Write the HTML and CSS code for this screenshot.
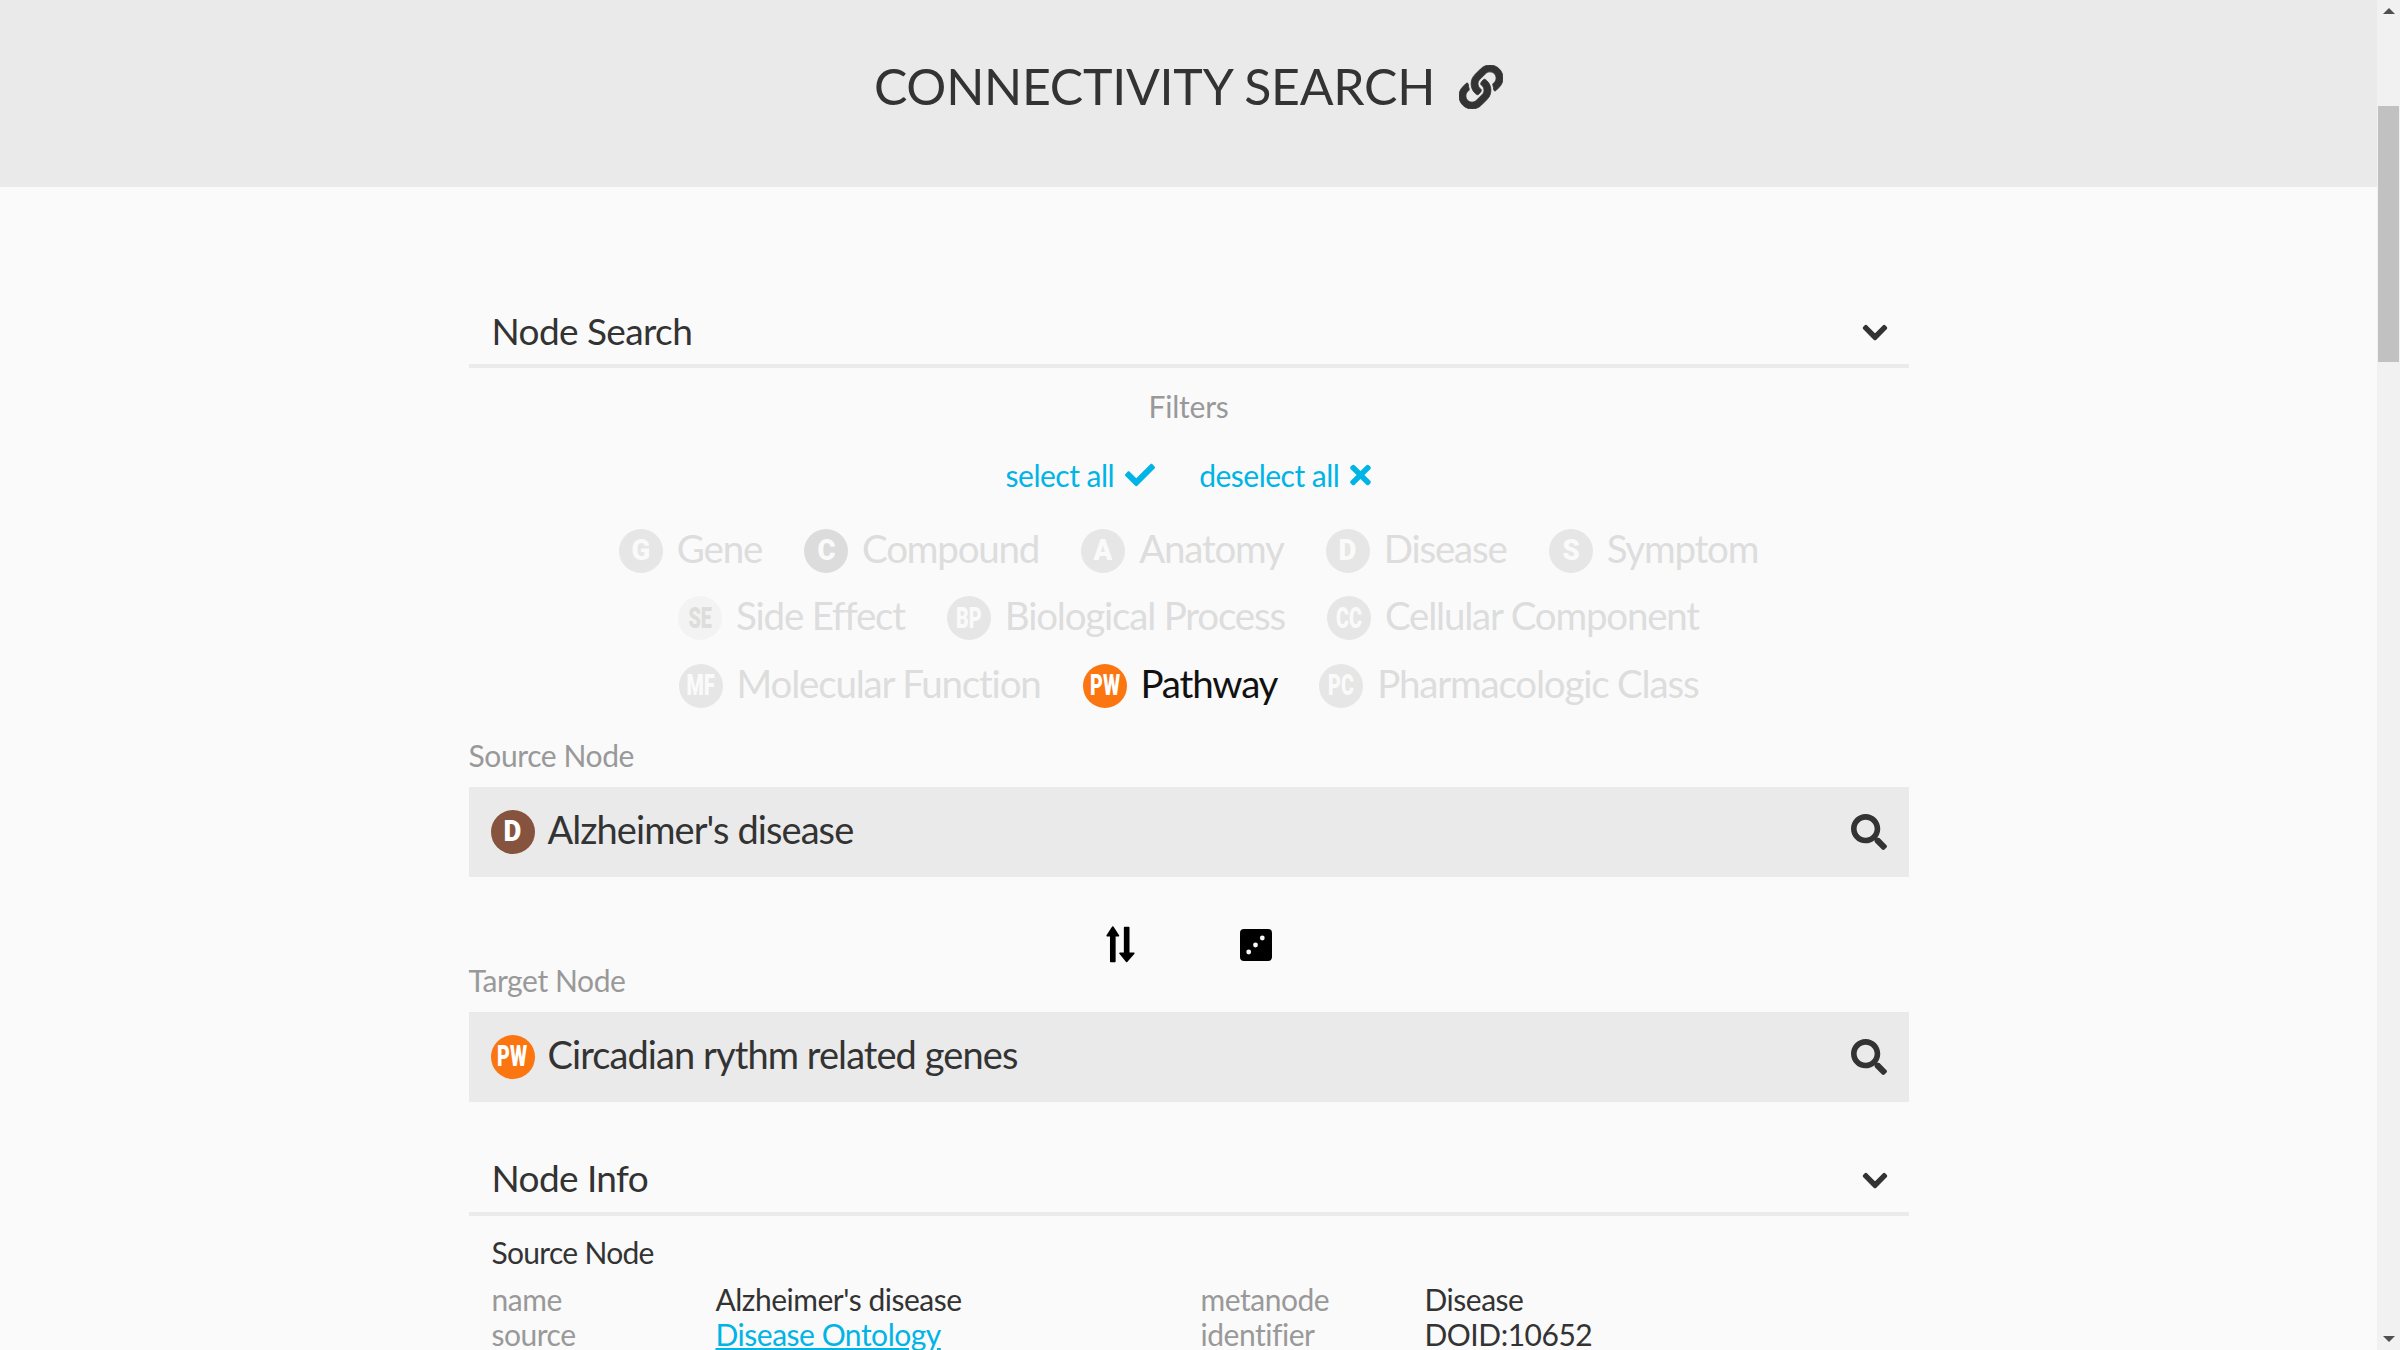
FILE: index.html
```html
<!DOCTYPE html>
<html lang="en">
<head>
<meta charset="utf-8">
<title>Connectivity Search</title>
<link rel="stylesheet" href="styles.css">
</head>
<body>
<div class="page">
  <header class="top">
    <h1 class="title">CONNECTIVITY SEARCH</h1>
    <svg class="link-icon" viewBox="0 0 512 512"><path d="M326.612 185.391c59.747 59.809 58.927 155.698.36 214.59-.11.12-.24.25-.36.37l-67.2 67.2c-59.27 59.27-155.699 59.262-214.96 0-59.27-59.26-59.27-155.7 0-214.96l37.106-37.106c9.84-9.84 26.786-3.3 27.294 10.606.648 17.722 3.826 35.527 9.69 52.721 1.986 5.822.567 12.262-3.783 16.612l-13.087 13.087c-28.026 28.026-28.905 73.66-1.155 101.96 28.024 28.579 74.086 28.749 102.325.51l67.2-67.19c28.191-28.191 28.073-73.757 0-101.83-3.701-3.694-7.429-6.564-10.341-8.569a16.037 16.037 0 0 1-6.947-12.606c-.396-10.567 3.348-21.456 11.698-29.806l21.054-21.055c5.521-5.521 14.182-6.199 20.584-1.731a152.482 152.482 0 0 1 20.522 17.197zM467.547 44.449c-59.261-59.262-155.69-59.27-214.96 0l-67.2 67.2c-.12.12-.25.25-.36.37-58.566 58.892-59.387 154.781.36 214.59a152.454 152.454 0 0 0 20.521 17.196c6.402 4.468 15.064 3.789 20.584-1.731l21.054-21.055c8.35-8.35 12.094-19.239 11.698-29.806a16.037 16.037 0 0 0-6.947-12.606c-2.912-2.005-6.64-4.875-10.341-8.569-28.073-28.073-28.191-73.639 0-101.83l67.2-67.19c28.239-28.239 74.3-28.069 102.325.51 27.75 28.3 26.872 73.934-1.155 101.96l-13.087 13.087c-4.35 4.35-5.769 10.79-3.783 16.612 5.864 17.194 9.042 34.999 9.69 52.721.509 13.906 17.454 20.446 27.294 10.606l37.106-37.106c59.271-59.259 59.271-155.699.001-214.959z"/></svg>
  </header>
  <main class="content">
    <section class="heading heading-first">
      <h2 class="heading-text">Node Search</h2>
      <svg class="chevron" viewBox="-20 100 488 310"><path d="M207.029 381.476L12.686 187.132c-9.373-9.373-9.373-24.569 0-33.941l22.667-22.667c9.357-9.357 24.522-9.375 33.901-.04L224 284.505l154.745-154.021c9.379-9.335 24.544-9.317 33.901.04l22.667 22.667c9.373 9.373 9.373 24.569 0 33.941L240.971 381.476c-9.373 9.372-24.569 9.372-33.942 0z"/></svg>
    </section>
    <div class="filters-label">Filters</div>
    <div class="select-row">
      <a class="select-link">select all <svg class="sel-icon" viewBox="0 0 512 512"><path d="M173.898 439.404l-166.4-166.4c-9.997-9.997-9.997-26.206 0-36.204l36.203-36.204c9.997-9.998 26.207-9.998 36.204 0L192 312.69 432.095 72.596c9.997-9.997 26.207-9.997 36.204 0l36.203 36.204c9.997 9.997 9.997 26.206 0 36.204l-294.4 294.401c-9.998 9.997-26.207 9.997-36.204-.001z"/></svg></a>
      <a class="select-link">deselect all <svg class="sel-icon x-icon" viewBox="0 0 352 512"><path d="M242.72 256l100.07-100.07c12.28-12.28 12.28-32.19 0-44.48l-22.24-22.24c-12.28-12.28-32.19-12.28-44.48 0L176 189.28 75.93 89.21c-12.28-12.28-32.19-12.28-44.48 0L9.21 111.45c-12.28 12.28-12.28 32.19 0 44.48L109.28 256 9.21 356.07c-12.28 12.28-12.28 32.19 0 44.48l22.24 22.24c12.28 12.28 32.2 12.28 44.48 0L176 322.72l100.07 100.07c12.28 12.28 32.2 12.28 44.48 0l22.24-22.24c12.28-12.28 12.28-32.19 0-44.48L242.72 256z"/></svg></a>
    </div>
    <div class="chips">
      <div class="chip-row">
        <span class="chip"><span class="badge"><span class="b-one">G</span></span>Gene</span>
        <span class="chip"><span class="badge badge-dark"><span class="b-one">C</span></span>Compound</span>
        <span class="chip"><span class="badge"><span class="b-one">A</span></span>Anatomy</span>
        <span class="chip"><span class="badge"><span class="b-one">D</span></span>Disease</span>
        <span class="chip"><span class="badge"><span class="b-one">S</span></span>Symptom</span>
      </div>
      <div class="chip-row">
        <span class="chip"><span class="badge badge-light"><span class="b-two">SE</span></span>Side Effect</span>
        <span class="chip"><span class="badge"><span class="b-two">BP</span></span>Biological Process</span>
        <span class="chip"><span class="badge"><span class="b-two">CC</span></span>Cellular Component</span>
      </div>
      <div class="chip-row">
        <span class="chip"><span class="badge"><span class="b-two">MF</span></span>Molecular Function</span>
        <span class="chip chip-on"><span class="badge badge-pw"><span class="b-two">PW</span></span>Pathway</span>
        <span class="chip"><span class="badge"><span class="b-two">PC</span></span>Pharmacologic Class</span>
      </div>
    </div>
    <label class="field-label">Source Node</label>
    <div class="input">
      <span class="badge badge-d"><span class="b-one">D</span></span><span class="input-text">Alzheimer's disease</span>
      <svg class="search" viewBox="0 0 512 512"><path d="M505 442.7L405.3 343c-4.5-4.5-10.6-7-17-7H372c27.6-35.3 44-79.7 44-128C416 93.1 322.9 0 208 0S0 93.1 0 208s93.1 208 208 208c48.3 0 92.7-16.4 128-44v16.3c0 6.4 2.5 12.5 7 17l99.7 99.7c9.4 9.4 24.6 9.4 33.9 0l28.3-28.3c9.4-9.4 9.4-24.6.1-34zM208 336c-70.7 0-128-57.2-128-128 0-70.7 57.2-128 128-128 70.7 0 128 57.2 128 128 0 70.7-57.2 128-128 128z"/></svg>
    </div>
    <div class="swap-row">
      <svg class="swap" viewBox="0 0 29 36"><path d="M7.5 1 13 9.5H9.5V34.5H5.5V9.5H2zM19 1.500H23V26.500H28L21 34.500 14.500 26.500H19z"/></svg>
      <svg class="dice" viewBox="0 0 32 32"><rect width="32" height="32" rx="4"/><circle class="pip" cx="8.700" cy="23" r="2.400"/><circle class="pip" cx="15.500" cy="16" r="2.400"/><circle class="pip" cx="22.300" cy="9" r="2.400"/></svg>
    </div>
    <label class="field-label field-label-target">Target Node</label>
    <div class="input">
      <span class="badge badge-pw"><span class="b-two">PW</span></span><span class="input-text">Circadian rythm related genes</span>
      <svg class="search" viewBox="0 0 512 512"><path d="M505 442.7L405.3 343c-4.5-4.5-10.6-7-17-7H372c27.6-35.3 44-79.7 44-128C416 93.1 322.9 0 208 0S0 93.1 0 208s93.1 208 208 208c48.3 0 92.7-16.4 128-44v16.3c0 6.4 2.5 12.5 7 17l99.7 99.7c9.4 9.4 24.6 9.4 33.9 0l28.3-28.3c9.4-9.4 9.4-24.6.1-34zM208 336c-70.7 0-128-57.2-128-128 0-70.7 57.2-128 128-128 70.7 0 128 57.2 128 128 0 70.7-57.2 128-128 128z"/></svg>
    </div>
    <section class="heading heading-info">
      <h2 class="heading-text">Node Info</h2>
      <svg class="chevron" viewBox="-20 100 488 310"><path d="M207.029 381.476L12.686 187.132c-9.373-9.373-9.373-24.569 0-33.941l22.667-22.667c9.357-9.357 24.522-9.375 33.901-.04L224 284.505l154.745-154.021c9.379-9.335 24.544-9.317 33.901.04l22.667 22.667c9.373 9.373 9.373 24.569 0 33.941L240.971 381.476c-9.373 9.372-24.569 9.372-33.942 0z"/></svg>
    </section>
    <div class="info">
      <div class="info-title">Source Node</div>
      <div class="info-grid">
        <span class="key">name</span><span class="val">Alzheimer's disease</span>
        <span class="key">metanode</span><span class="val">Disease</span>
        <span class="key">source</span><a class="val val-link">Disease Ontology</a>
        <span class="key">identifier</span><span class="val">DOID:10652</span>
      </div>
    </div>
  </main>
</div>
<aside class="scrollbar">
  <span class="arrow-up"></span>
  <span class="track"><span class="thumb"></span></span>
  <span class="arrow-down"></span>
</aside>
</body>
</html>
```
FILE: styles.css
```css
html, body { margin: 0; padding: 0; height: 100%; overflow: hidden; }
body { display: flex; background: #fafafa; color: #333; font-family: Lato, "Open Sans", sans-serif; }
.page { flex: 1; min-width: 0; height: 1350px; overflow: hidden; }
.top { height: 187px; background: #eaeaea; display: flex; align-items: center; justify-content: center; gap: 24px; padding-bottom: 14px; box-sizing: border-box; }
.title { margin: 0 0 2px; font-size: 50px; font-weight: 400; line-height: 1; color: #333; letter-spacing: -0.25px; }
.link-icon { width: 44px; height: 44px; fill: #333; stroke: #333; stroke-width: 10; }
.content { width: 1440px; margin: 0 auto; }
.heading { height: 52px; padding: 0 21px 8px 23px; border-bottom: 4px solid #ebebeb; display: flex; align-items: center; justify-content: space-between; }
.heading-first { margin-top: 117px; }
.heading-info { margin-top: 50px; }
.heading-text { margin: 0; font-size: 37px; font-weight: 400; color: #333; letter-spacing: -0.6px; }
.chevron { width: 26px; height: 17px; margin-top: 5px; fill: #333; stroke: #333; stroke-width: 22; }
.filters-label { text-align: center; font-size: 30px; line-height: 40px; color: #999; margin-top: 18px; letter-spacing: -0.2px; }
.select-row { display: flex; justify-content: center; gap: 44px; margin-top: 29px; height: 40px; align-items: center; }
.select-link { font-size: 30px; color: #00b4e6; display: flex; align-items: center; gap: 11px; letter-spacing: -0.5px; }
.sel-icon { width: 30px; height: 30px; fill: #00b4e6; }
.x-icon { width: 21px; }
.chips { margin-top: 19px; }
.chip-row { display: flex; justify-content: center; gap: 42px; height: 67.5px; align-items: center; }
.chip { display: flex; align-items: center; gap: 14px; font-size: 38.5px; letter-spacing: -1.2px; color: #ddd; line-height: 1; }
.chip .badge { margin-top: 6px; }
.chip-on { color: #111; }
.badge { width: 44px; height: 44px; border-radius: 50%; background: #e6e6e6; color: #fafafa; font-family: Roboto, Lato, sans-serif; font-size: 29px; font-weight: 900; display: flex; align-items: center; justify-content: center; flex: none; line-height: 1; letter-spacing: 0; }
.b-one { display: inline-block; transform: scaleX(0.95); }
.b-two { display: inline-block; transform: scaleX(0.68); }
.badge-dark { background: #dcdcdc; }
.badge-light { background: #f3f3f3; color: #ddd; }
.badge-pw { background: #fb7510; color: #fff; }
.badge-d { background: #86533f; color: #fff; }
.field-label { display: block; font-size: 30px; line-height: 40px; color: #999; margin-bottom: 12px; letter-spacing: -0.4px; }
.chips + .field-label { margin-top: 18px; }
.input { height: 90px; background: #eaeaea; display: flex; align-items: center; padding: 0 22px; }
.input-text { font-size: 38px; letter-spacing: -0.92px; color: #333; margin-left: 13px; padding-bottom: 5px; flex: 1; }
.search { width: 36px; height: 36px; fill: #333; }
.swap-row { height: 68px; display: flex; justify-content: center; align-items: center; gap: 105px; margin-top: 34px; }
.swap { width: 30px; height: 37px; fill: #000; stroke: #000; stroke-width: 1.5; stroke-linejoin: round; }
.dice { width: 32px; height: 32px; fill: #000; }
.pip { fill: #fafafa; }
.field-label-target { margin-top: -19px; }
.info { padding: 0 22px; }
.info-title { font-size: 30px; line-height: 40px; color: #333; margin-top: 16px; padding-left: 1px; letter-spacing: -0.7px; }
.info-grid { display: grid; grid-template-columns: 224px 485px 224px 1fr; grid-auto-rows: 35px; margin-top: 10px; font-size: 30px; line-height: 35px; letter-spacing: -0.48px; padding-left: 1px; }
.key { color: #999; }
.val { color: #333; }
.val-link { color: #00b4e6; text-decoration: underline; }
.scrollbar { width: 23px; height: 1350px; background: #f1f1f1; flex: none; display: flex; flex-direction: column; align-items: center; }
.arrow-up, .arrow-down { flex: none; width: 0; height: 0; border-left: 6px solid transparent; border-right: 6px solid transparent; }
.arrow-up { border-bottom: 6px solid #505050; margin: 8px 0; }
.arrow-down { border-top: 6px solid #505050; margin: 8px 0; }
.track { flex: 1; width: 100%; }
.thumb { display: block; margin: 84px 1px 0; height: 256px; background: #c1c1c1; }
```
